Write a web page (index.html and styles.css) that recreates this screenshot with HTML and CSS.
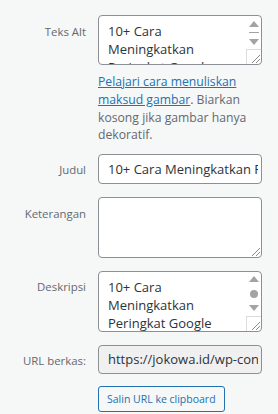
FILE: index.html
```html
<!DOCTYPE html>
<html lang="id">
<head>
<meta charset="utf-8">
<link rel="stylesheet" href="styles.css">
</head>
<body>
<div class="details">
  <div class="setting setting-alt">
    <label class="name name-alt">Teks Alt</label>
    <div class="field">
      <div class="box box-alt">
        <textarea class="ta-text">10+ Cara Meningkatkan Peringkat Google Secara Organik</textarea>
        <div class="sb">
          <div class="sb-btn"><svg width="10" height="6" viewBox="0 0 10 6"><polygon points="5,0 10,6 0,6" fill="#a3a3a3"/></svg></div>
          <div class="sb-track"><span class="thumb-line"></span></div>
          <div class="sb-btn"><svg width="10" height="6" viewBox="0 0 10 6"><polygon points="0,0 10,0 5,6" fill="#a3a3a3"/></svg></div>
        </div>
        <div class="grip grip-boxed"><svg width="14" height="14" viewBox="0 0 14 14"><path d="M13 5 L5 13 M13 9 L9 13" stroke="#8a8a8a" stroke-width="1"/></svg></div>
      </div>
      <p class="help"><a href="#">Pelajari cara menuliskan maksud gambar</a>. Biarkan kosong jika gambar hanya dekoratif.</p>
    </div>
  </div>

  <div class="setting">
    <label class="name">Judul</label>
    <div class="field">
      <input class="inp" type="text" value="10+ Cara Meningkatkan Peringkat Google Secara Organik">
    </div>
  </div>

  <div class="setting">
    <label class="name name-alt">Keterangan</label>
    <div class="field">
      <div class="box box-tall">
        <textarea class="ta-text"></textarea>
        <div class="grip"><svg width="14" height="14" viewBox="0 0 14 14"><path d="M13 5 L5 13 M13 9 L9 13" stroke="#8a8a8a" stroke-width="1"/></svg></div>
      </div>
    </div>
  </div>

  <div class="setting">
    <label class="name">Deskripsi</label>
    <div class="field">
      <div class="box box-tall">
        <textarea class="ta-text">10+ Cara Meningkatkan Peringkat Google Secara Organik</textarea>
        <div class="sb">
          <div class="sb-btn"><svg width="10" height="6" viewBox="0 0 10 6"><polygon points="5,0 10,6 0,6" fill="#a3a3a3"/></svg></div>
          <div class="sb-track"><span class="thumb-dot"></span></div>
          <div class="sb-btn"><svg width="10" height="6" viewBox="0 0 10 6"><polygon points="0,0 10,0 5,6" fill="#a3a3a3"/></svg></div>
        </div>
        <div class="grip grip-boxed"><svg width="14" height="14" viewBox="0 0 14 14"><path d="M13 5 L5 13 M13 9 L9 13" stroke="#8a8a8a" stroke-width="1"/></svg></div>
      </div>
    </div>
  </div>

  <div class="setting">
    <label class="name">URL berkas:</label>
    <div class="field">
      <input class="inp inp-ro" type="text" readonly value="https://jokowa.id/wp-content/uploads/2023/gambar.jpg">
    </div>
  </div>

  <div class="setting">
    <span class="name"></span>
    <div class="field">
      <button class="btn" type="button">Salin URL ke clipboard</button>
    </div>
  </div>
</div>
</body>
</html>
```

FILE: styles.css
```css
html, body {
  margin: 0;
  padding: 0;
  background: #f6f7f7;
}
body {
  font-family: "Open Sans", "Noto Sans", sans-serif;
  color: #2c3338;
}
.details {
  padding-top: 15px;
}
.setting {
  display: grid;
  grid-template-columns: 86px 164px;
  column-gap: 12px;
  margin-bottom: 13px;
}
.setting-alt {
  margin-bottom: 10px;
}
.name {
  text-align: right;
  font-size: 11.4px;
  line-height: 18px;
  color: #646970;
  padding-top: 7px;
}
.name-alt {
  padding-top: 8px;
}
.field {
  min-width: 0;
}
.box {
  position: relative;
  box-sizing: border-box;
  border: 1px solid #8c8f94;
  border-radius: 4px;
  background: #fff;
  overflow: hidden;
}
.box-alt { height: 50px; }
.box-tall { height: 61px; }
.ta-text {
  display: block;
  box-sizing: border-box;
  width: 100%;
  height: 100%;
  margin: 0;
  border: 0;
  outline: 0;
  resize: none;
  overflow: hidden;
  background: transparent;
  padding: 6px 16px 0 9px;
  font-family: inherit;
  font-size: 13px;
  line-height: 18.2px;
  color: #2c3338;
}
.sb {
  position: absolute;
  top: 0;
  right: 0;
  bottom: 15px;
  width: 15px;
  display: flex;
  flex-direction: column;
}
.sb-btn {
  flex: 0 0 15px;
  display: flex;
  align-items: center;
  justify-content: center;
}
.sb-track {
  flex: 1;
  display: flex;
  align-items: center;
  justify-content: center;
}
.thumb-line {
  width: 10px;
  height: 1px;
  background: #a3a3a3;
}
.thumb-dot {
  width: 8px;
  height: 8px;
  border-radius: 50%;
  background: #a3a3a3;
}
.grip {
  position: absolute;
  right: 0;
  bottom: 0;
  width: 15px;
  height: 15px;
  box-sizing: border-box;
  display: flex;
  align-items: flex-end;
  justify-content: flex-end;
}
.grip svg { display: block; }
.grip-boxed {
  border-left: 1px solid #dcdcde;
  border-top: 1px solid #dcdcde;
}
.help {
  margin: 8px 0 0;
  font-size: 12.2px;
  line-height: 17.8px;
  color: #646970;
}
.help a {
  color: #2271b1;
  text-decoration: underline;
}
.inp {
  display: block;
  box-sizing: border-box;
  width: 100%;
  height: 29.5px;
  margin: 0;
  border: 1px solid #8c8f94;
  border-radius: 4px;
  background: #fff;
  padding: 0 3px 0 9px;
  font-family: inherit;
  font-size: 13px;
  color: #2c3338;
  outline: 0;
}
.inp-ro {
  background: #f0f0f1;
}
.btn {
  display: block;
  box-sizing: border-box;
  height: 26px;
  margin: -1px 0 0;
  padding: 0 8px;
  border: 1px solid #2271b1;
  border-radius: 3px;
  background: #f6f7f7;
  color: #2271b1;
  font-family: inherit;
  font-size: 10.5px;
  line-height: 24px;
  cursor: pointer;
}
```
